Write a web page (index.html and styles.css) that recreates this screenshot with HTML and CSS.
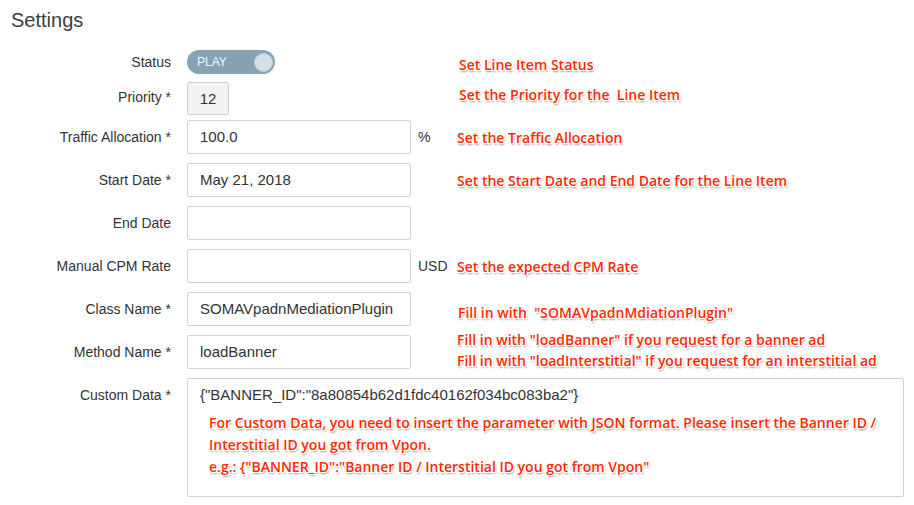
FILE: index.html
```html
<!DOCTYPE html>
<html>
<head>
<meta charset="utf-8">
<link rel="stylesheet" href="styles.css">
</head>
<body>
<div class="page">
  <h2 class="title">Settings</h2>
  <div class="form">
    <div class="row row-status">
      <div class="label">Status</div>
      <div class="field"><div class="toggle"><span class="toggle-text">PLAY</span><span class="knob"></span></div></div>
      <div class="suffix"></div>
      <div class="note">Set Line Item Status</div>
    </div>

    <div class="row row-priority">
      <div class="label label-up">Priority *</div>
      <div class="field"><div class="priority">12</div></div>
      <div class="suffix"></div>
      <div class="note note-up">Set the Priority for the&nbsp; Line Item</div>
    </div>

    <div class="row">
      <div class="label">Traffic Allocation *</div>
      <div class="field"><div class="input">100.0</div></div>
      <div class="suffix">%</div>
      <div class="note">Set the Traffic Allocation</div>
    </div>

    <div class="row">
      <div class="label">Start Date *</div>
      <div class="field"><div class="input">May 21, 2018</div></div>
      <div class="suffix"></div>
      <div class="note">Set the Start Date and End Date for the Line Item</div>
    </div>

    <div class="row">
      <div class="label">End Date</div>
      <div class="field"><div class="input"></div></div>
      <div class="suffix"></div>
      <div class="note"></div>
    </div>

    <div class="row">
      <div class="label">Manual CPM Rate</div>
      <div class="field"><div class="input"></div></div>
      <div class="suffix">USD</div>
      <div class="note">Set the expected CPM Rate</div>
    </div>

    <div class="row">
      <div class="label">Class Name *</div>
      <div class="field"><div class="input">SOMAVpadnMediationPlugin</div></div>
      <div class="suffix"></div>
      <div class="note note-down">Fill in with&nbsp; "SOMAVpadnMdiationPlugin"</div>
    </div>

    <div class="row">
      <div class="label">Method Name *</div>
      <div class="field"><div class="input">loadBanner</div></div>
      <div class="suffix"></div>
      <div class="note note-multi">Fill in with "loadBanner" if you request for a banner ad<br>Fill in with "loadInterstitial" if you request for an interstitial ad</div>
    </div>

    <div class="row row-custom">
      <div class="label label-top">Custom Data *</div>
      <div class="custom">
        <div class="custom-value">{"BANNER_ID":"8a80854b62d1fdc40162f034bc083ba2"}</div>
        <div class="note custom-note">For Custom Data, you need to insert the parameter with JSON format. Please insert the Banner ID /<br>Interstitial ID you got from Vpon.<br>e.g.: {"BANNER_ID":"Banner ID / Interstitial ID you got from Vpon"</div>
      </div>
    </div>
  </div>
</div>
</body>
</html>
```
FILE: styles.css
```css
html, body {
  margin: 0;
  padding: 0;
  background: #fff;
}
body {
  font-family: "Liberation Sans", Arial, sans-serif;
  font-size: 14px;
  color: #333;
}
.page {
  padding: 8px 10px 0 0;
}
.title {
  margin: 0 0 0 11px;
  font-size: 20px;
  font-weight: normal;
  line-height: 24px;
  color: #3d3d3d;
}
.form {
  margin-top: 18px;
  display: flex;
  flex-direction: column;
  gap: 9px;
}
.row {
  display: grid;
  grid-template-columns: 187px 224px 46px 1fr;
  grid-template-rows: 100%;
  align-items: center;
  height: 34px;
}
.row-status {
  height: 24px;
  margin-bottom: -1px;
}
.row-priority {
  height: 33px;
  margin-bottom: -4px;
}
.row-custom {
  height: 119px;
  align-items: start;
}
.label {
  text-align: right;
  padding-right: 16px;
  color: #333;
  white-space: nowrap;
}
.label-up {
  margin-top: -3px;
}
.label-top {
  padding-top: 9px;
}
.field {
  display: flex;
  align-items: center;
}
.toggle {
  width: 88px;
  height: 24px;
  border-radius: 12px;
  background: #87a2b1;
  display: flex;
  align-items: center;
  justify-content: space-between;
  padding: 0 2px 0 10px;
  box-sizing: border-box;
}
.toggle-text {
  color: #f4f7f9;
  font-size: 12px;
}
.knob {
  width: 19px;
  height: 19px;
  border-radius: 50%;
  background: #d3dfe6;
  border: 1px solid #c0cfd8;
  box-sizing: border-box;
}
.priority {
  width: 42px;
  height: 33px;
  box-sizing: border-box;
  border: 1px solid #cfcfcf;
  border-radius: 2px;
  background: #f3f3f3;
  font-size: 15px;
  display: flex;
  align-items: center;
  justify-content: center;
}
.input {
  width: 224px;
  height: 34px;
  box-sizing: border-box;
  border: 1px solid #d2d2d2;
  border-radius: 2px;
  padding: 0 12px;
  font-size: 15px;
  line-height: 32px;
  color: #333;
  white-space: nowrap;
}
.suffix {
  padding-left: 7px;
  font-size: 14px;
  color: #333;
}
.note {
  font-family: "Open Sans", "Liberation Sans", sans-serif;
  font-weight: 600;
  font-size: 14px;
  color: #ff2a00;
  white-space: nowrap;
  text-shadow:
    1px 0 0 #fff, -1px 0 0 #fff, 0 1px 0 #fff, 0 -1px 0 #fff,
    1px 1px 0 #fff, -1px -1px 0 #fff, 1px -1px 0 #fff, -1px 1px 0 #fff,
    1px 2px 2px rgba(0, 0, 0, 0.45);
}
.row-status .note {
  margin-top: 4px;
  padding-left: 2px;
}
.note-up {
  margin-top: -8px;
  padding-left: 2px;
}
.note-down {
  margin-top: 6px;
  padding-left: 1px;
}
.note-multi {
  line-height: 21px;
  margin-top: -5px;
}
.custom {
  grid-column: 2 / 5;
  height: 119px;
  box-sizing: border-box;
  border: 1px solid #d2d2d2;
  border-radius: 2px;
  padding: 7px 12px;
}
.custom-value {
  font-size: 15px;
  line-height: 18px;
  color: #333;
}
.custom-note {
  margin-top: 8px;
  padding-left: 9px;
  line-height: 22px;
}
```
